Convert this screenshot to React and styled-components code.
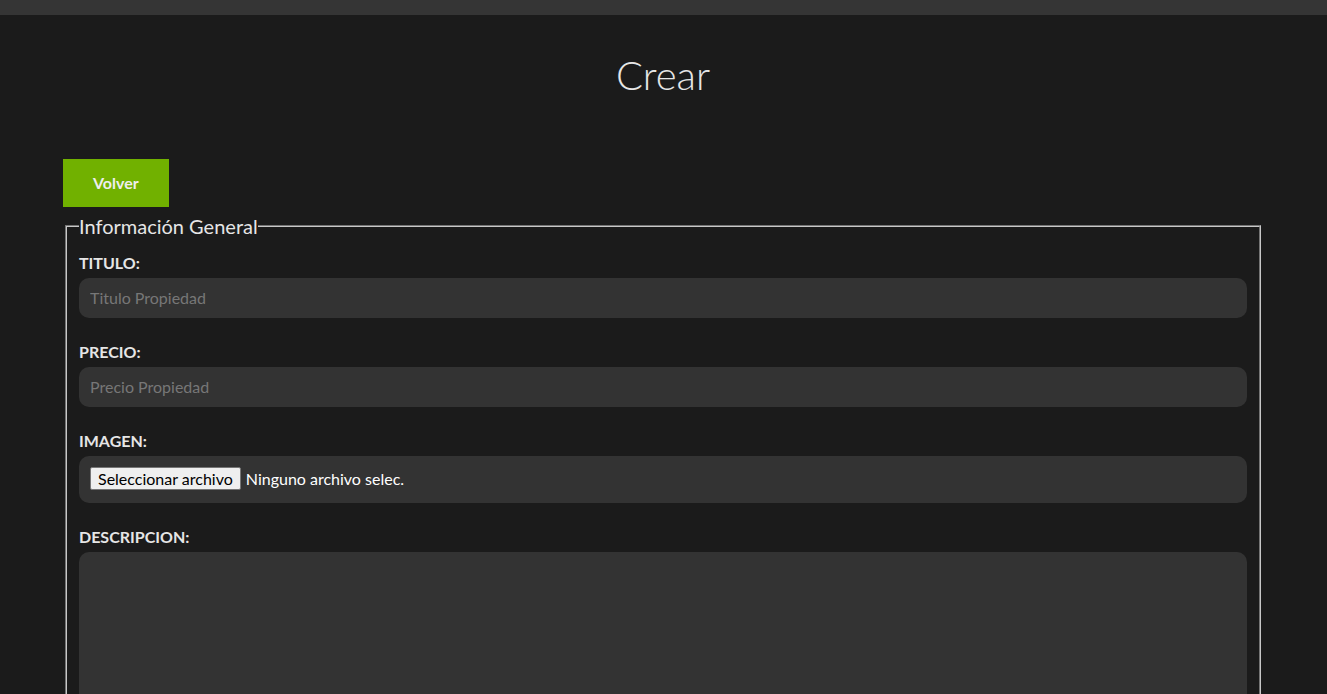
import React from "react";
import styled, { createGlobalStyle } from "styled-components";

const GlobalStyle = createGlobalStyle`
  * { box-sizing: border-box; }
  body {
    margin: 0;
    background: #1b1b1b;
    font-family: Lato, "Open Sans", sans-serif;
    color: #e6e6e6;
  }
`;

const TopBar = styled.div`
  height: 15px;
  background: #353535;
`;

const Container = styled.main`
  width: 1200px;
  max-width: 100%;
  margin-left: calc((100% - 1200px) / 2 - 0.5px);
`;

const Title = styled.h1`
  margin: 36px 0 60px;
  text-align: center;
  font-weight: 300;
  font-size: 40px;
  line-height: 48px;
  color: #e6e6e6;
`;

const Button = styled.a`
  display: inline-block;
  background: #71b100;
  color: #eeeeee;
  font-weight: 700;
  font-size: 16px;
  line-height: 19px;
  padding: 14px 30px 15px;
  text-decoration: none;
  cursor: pointer;
`;

const Fieldset = styled.fieldset`
  margin: 7px 2px 0;
  padding: 6px 12px 10px;
  border: 2px groove #c8c8c8;
  border-bottom: none;
`;

const Legend = styled.legend`
  font-size: 20px;
  padding: 0;
  color: #e6e6e6;
`;

const Field = styled.div`
  display: flex;
  flex-direction: column;
  margin-top: ${(p) => (p.first ? "9px" : "24px")};
`;

const Label = styled.label`
  font-weight: 700;
  font-size: 16px;
  line-height: 19px;
  text-transform: uppercase;
  margin-bottom: 6px;
  color: #e6e6e6;
`;

const Input = styled.input`
  height: 40px;
  border: none;
  border-radius: 10px;
  background: #333333;
  color: #e6e6e6;
  padding: 0 11px 2px;
  font-family: Lato, sans-serif;
  font-size: 16px;
  outline: none;
  &::placeholder {
    color: #777777;
  }
`;

const FileBox = styled.div`
  height: 47px;
  border-radius: 10px;
  background: #333333;
  display: flex;
  align-items: center;
  gap: 5px;
  padding: 0 11px 2px;
  font-size: 16px;
  color: #ffffff;
`;

const FileButton = styled.span`
  display: inline-flex;
  align-items: center;
  height: 23px;
  padding: 0 7px;
  background: #efefef;
  border: 1px solid #767676;
  border-radius: 2px;
  color: #000000;
  font-size: 16px;
`;

const TextArea = styled.textarea`
  height: 220px;
  border: none;
  border-radius: 10px;
  background: #333333;
  color: #e6e6e6;
  padding: 11px;
  resize: vertical;
  font-family: Lato, sans-serif;
  font-size: 16px;
  outline: none;
`;

export default function App() {
  return (
    <>
      <GlobalStyle />
      <TopBar />
      <Container>
        <Title>Crear</Title>
        <Button>Volver</Button>
        <form>
          <Fieldset>
            <Legend>Información General</Legend>
            <Field first>
              <Label htmlFor="titulo">Titulo:</Label>
              <Input id="titulo" type="text" placeholder="Titulo Propiedad" />
            </Field>
            <Field>
              <Label htmlFor="precio">Precio:</Label>
              <Input id="precio" type="number" placeholder="Precio Propiedad" />
            </Field>
            <Field>
              <Label htmlFor="imagen">Imagen:</Label>
              <FileBox>
                <FileButton>Seleccionar archivo</FileButton>
                <span>Ninguno archivo selec.</span>
              </FileBox>
            </Field>
            <Field>
              <Label htmlFor="descripcion">Descripcion:</Label>
              <TextArea id="descripcion" />
            </Field>
          </Fieldset>
        </form>
      </Container>
    </>
  );
}
